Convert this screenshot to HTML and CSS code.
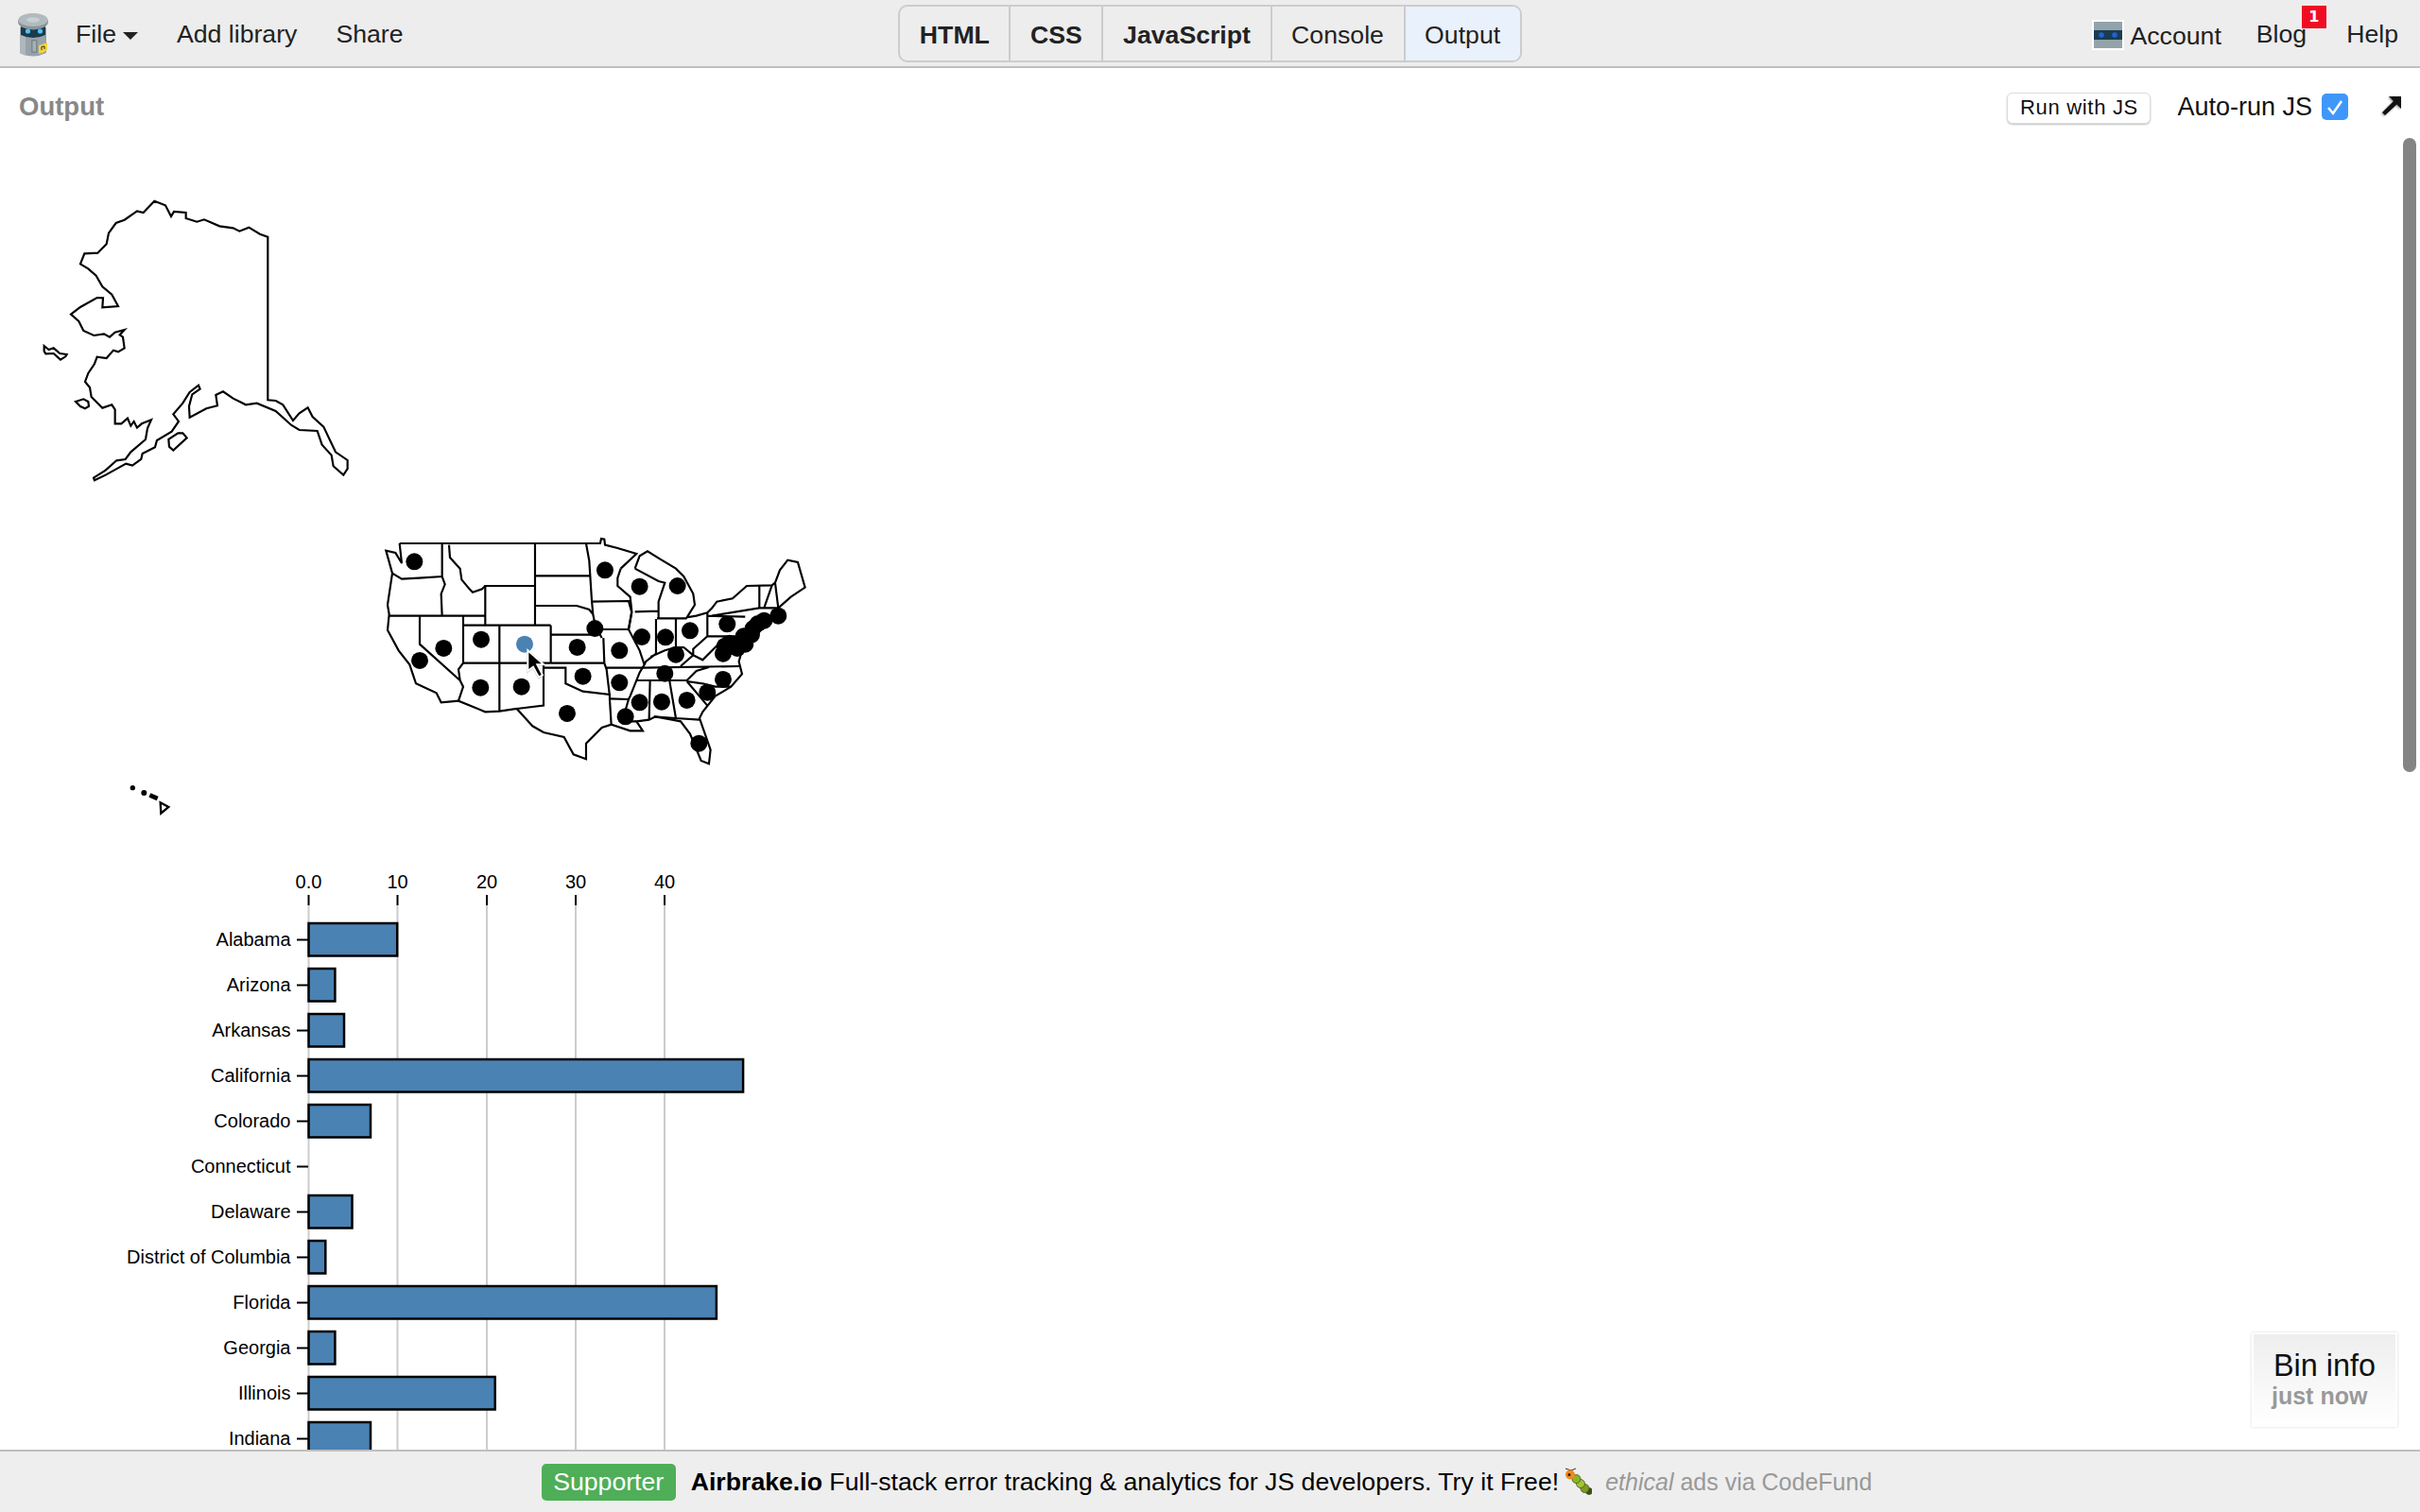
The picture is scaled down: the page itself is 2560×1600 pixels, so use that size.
FILE: index.html
```html
<!DOCTYPE html>
<html lang="en">
<head>
    <meta charset="UTF-8">
    <meta name="viewport" content="width=device-width, initial-scale=1.0">
    <title>JS Bin - Output</title>
    <link rel="stylesheet" href="styles.css">
</head>
<body>
    <!-- Top bar -->
    <header class="topbar">
        <nav class="menu">
            <svg class="logo" viewBox="10 6 50 60" width="50" height="60">
                <path d="M21 30 L21 57 Q35 64 49 57 L49 30 Z" fill="#97a3a9"/>
                <path d="M21 30 L21 57 Q24 59 27 60 L27 30 Z" fill="#aeb8bc"/>
                <path d="M22 27 H48 V38 Q35 44 22 38 Z" fill="#1c3a4b"/>
                <circle cx="29.500" cy="34" r="2.600" fill="#4cc5f6"/>
                <circle cx="42.500" cy="34" r="2.600" fill="#4cc5f6"/>
                <ellipse cx="35" cy="24" rx="16" ry="8.500" fill="#8b969b"/>
                <ellipse cx="35" cy="22" rx="15.500" ry="7" fill="#b1babe"/>
                <ellipse cx="35" cy="22" rx="7" ry="2.800" fill="#c8cfd2"/>
                <rect x="33" y="43" width="6.500" height="14" rx="1" fill="#7c888e"/>
                <rect x="34.500" y="44.500" width="3.500" height="11" fill="#a5afb4"/>
                <path d="M41 49 L50 46 V54 Q46 57 41 58 Z" fill="#f2d23c"/>
                <path d="M44 54 L44 50.500 L47 50 L47 53" stroke="#333" stroke-width="1" fill="none"/>
            </svg>
            <a class="menu-item file-item">File <span class="caret"></span></a>
            <a class="menu-item">Add library</a>
            <a class="menu-item">Share</a>
        </nav>
        <div class="tabs">
            <a class="tab tab-used">HTML</a>
            <a class="tab tab-used">CSS</a>
            <a class="tab tab-used">JavaScript</a>
            <a class="tab">Console</a>
            <a class="tab tab-active">Output</a>
        </div>
        <nav class="menu menu-right">
            <a class="menu-item account">
                <svg class="avatar" viewBox="0 0 30 28" width="34" height="32">
                    <rect width="30" height="28" fill="#93a3aa"/>
                    <rect y="9" width="30" height="10" fill="#1b3c50"/>
                    <circle cx="8" cy="14" r="2.800" fill="#1e63d6"/>
                    <circle cx="22" cy="14" r="2.800" fill="#1e63d6"/>
                </svg>
                Account
            </a>
            <a class="menu-item blog">Blog<span class="badge">1</span></a>
            <a class="menu-item">Help</a>
        </nav>
    </header>

    <!-- Output panel -->
    <main class="output">
        <div class="output-bar">
            <span class="output-title">Output</span>
            <div class="output-controls">
                <button type="button" class="run-btn">Run with JS</button>
                <label class="autorun">Auto-run JS
                    <span class="checkbox">
                        <svg viewBox="0 0 28 28" width="28" height="28">
                            <path d="M7 15 L12 21 L21 8" fill="none" stroke="#fff" stroke-width="2.500"/>
                        </svg>
                    </span>
                </label>
                <svg class="popout" viewBox="0 0 20 20" width="20" height="20">
                    <polygon points="20,0 20,13 15.500,8.500 3,20 0,17 12,5 7,0"/>
                </svg>
            </div>
        </div>

        <!-- Maps -->
        <svg class="maps" viewBox="0 154 900 746">
            <g class="state-lines" transform="translate(30 200) scale(0.3333)">
                <path class="ak" d="M400,38 435,52 453,87 462,72 500,75 500,93 535,104 558,97 607,118 650,124 670,134 700,122 735,143 760,152 760,670 785,672 808,685 840,735 860,712 887,694 902,723 937,755 975,835 1013,861 1013,888 1000,908 968,880 962,845 932,812 917,768 860,765 835,750 785,705 725,680 690,685 650,665 618,643 595,654 600,688 565,697 512,725 510,690 520,652 545,635 540,623 512,645 490,680 460,715 477,738 455,770 408,798 402,820 362,840 358,858 330,878 310,872 245,908 210,925 207,917 245,893 280,862 308,858 325,835 372,795 378,760 390,733 360,745 345,758 335,738 325,752 315,728 295,745 275,745 275,700 265,685 235,695 200,660 195,630 180,612 190,585 210,555 218,533 248,537 270,512 285,517 305,505 300,470 290,463 305,447 275,455 258,470 240,460 208,465 175,450 160,420 135,398 165,375 218,345 237,346 235,376 285,372 265,335 235,310 215,275 190,253 165,238 178,205 220,203 248,175 255,140 278,108 305,98 345,70 365,75 Z"/>
                <path class="ak" d="M50,498 65,510 80,505 100,522 122,525 118,532 102,542 80,522 55,523 50,515 Z"/>
                <path class="ak" d="M150,675 175,667 190,675 192,690 180,697 165,690 Z"/>
                <path class="ak" d="M445,795 475,775 490,775 503,790 460,830 447,818 Z"/>
            </g>

            <g transform="translate(125 820) scale(0.3333)">
                <circle cx="46" cy="41" r="8" class="dot"/>
                <circle cx="82" cy="57" r="9" class="dot"/>
                <path class="hi-chain" d="M100,64 L125,75"/>
                <path class="hi-big" d="M134,88 L160,102 L136,122 Z"/>
            </g>

            <g class="state-lines" transform="translate(390 560) scale(0.3333)">
                <path class="us" d="M98,45 L735,45 738,30 748,32 750,50 790,60 850,78 800,125 M845,125 860,85 885,70 925,95 975,125 1000,150 1030,205 1035,240 1010,280 1040,275 1075,265 1090,250 1105,230 1155,220 1200,180 1280,178 1290,170 1305,130 1330,98 1362,105 1385,185 1340,215 1300,250 1305,275 1240,300 1195,350 1175,420 1185,460 1150,500 1100,530 1060,580 1050,600 1085,700 1080,745 1055,735 1020,650 990,610 910,595 890,605 850,610 870,640 830,640 770,620 740,630 690,680 690,730 650,715 620,660 555,645 520,625 470,570 415,578 370,580 285,545 230,550 215,520 150,490 130,430 95,385 60,320 65,270 60,240 75,140 55,68 85,75 105,108 98,45"/>
                <path class="us" d="M75,140 105,158 160,155 235,150 M233,45 233,150 242,175 230,205 233,275 M65,275 370,275 M255,50 258,90 290,125 295,160 320,190 330,200 360,190 370,180"/>
                <path class="us" d="M370,180 528,180 528,305 370,305 Z M528,45 528,180 M530,148 700,148 M530,243 660,243 700,255 712,270 720,310 740,345 M690,45 700,100 708,225 712,270 M705,230 825,228 835,265 825,318 M578,305 528,305 M578,305 578,425 M578,335 720,335 M578,425 748,425 M745,345 748,425"/>
                <path class="us" d="M162,275 162,365 290,480 285,445 300,425 300,275 M300,305 370,305 M415,305 415,578 M300,425 578,425 M290,480 300,500 285,545 M555,425 555,560 470,570 M555,440 625,440 625,490 680,515 765,525 765,540 770,620"/>
                <path class="us" d="M720,318 825,318 860,385 875,430 860,455 830,530 825,540 805,610 850,610 M748,425 755,445 765,530 M750,440 870,440 M765,538 825,540"/>
                <path class="us" d="M800,125 790,155 790,180 830,215 835,260 825,318 M845,125 920,165 940,170 920,230 920,280 M845,262 920,260 M912,285 912,395 880,420 875,430 M915,283 1010,283 M975,285 975,375 M895,405 940,385 975,375 1000,375 1030,400 990,435 M1075,265 1075,340 1030,380 1030,400 1060,415 1100,375 1120,355 M1075,340 1190,340 M1075,275 1195,278"/>
                <path class="us" d="M870,440 1178,435 M850,480 1010,480 1040,450 1080,438 M1010,483 1060,490 1100,500 1150,500 M1010,483 1075,560 M893,480 890,605 M955,482 975,600 M905,595 975,600 1050,605 M1090,275 1240,250 1300,250 M1240,180 1240,250 M1255,250 1280,178 M1290,170 1300,250"/>
            </g>

            <g transform="translate(390 560) scale(0.3333)">
                <circle class="dot" cx="145" cy="103" r="27"/>
                <circle class="dot" cx="750" cy="130" r="27"/>
                <circle class="dot" cx="860" cy="182" r="27"/>
                <circle class="dot" cx="980" cy="180" r="27"/>
                <circle class="dot" cx="1138" cy="301" r="27"/>
                <circle class="dot" cx="718" cy="315" r="27"/>
                <circle class="dot" cx="1300" cy="275" r="27"/>
                <circle class="dot" cx="1255" cy="290" r="27"/>
                <circle class="dot" cx="1020" cy="322" r="27"/>
                <circle class="dot" cx="942" cy="343" r="27"/>
                <circle class="dot" cx="867" cy="342" r="27"/>
                <circle class="dot" cx="796" cy="385" r="27"/>
                <circle class="dot" cx="662" cy="375" r="27"/>
                <circle class="dot" cx="357" cy="350" r="27"/>
                <circle class="dot" cx="238" cy="378" r="27"/>
                <circle class="dot" cx="162" cy="417" r="27"/>
                <circle class="dot" cx="355" cy="503" r="27"/>
                <circle class="dot" cx="485" cy="500" r="27"/>
                <circle class="dot" cx="680" cy="467" r="27"/>
                <circle class="dot" cx="796" cy="487" r="27"/>
                <circle class="dot" cx="975" cy="398" r="27"/>
                <circle class="dot" cx="1125" cy="395" r="27"/>
                <circle class="dot" cx="940" cy="458" r="27"/>
                <circle class="dot" cx="1125" cy="477" r="27"/>
                <circle class="dot" cx="1075" cy="518" r="27"/>
                <circle class="dot" cx="860" cy="550" r="27"/>
                <circle class="dot" cx="930" cy="548" r="27"/>
                <circle class="dot" cx="1010" cy="543" r="27"/>
                <circle class="dot" cx="815" cy="595" r="27"/>
                <circle class="dot" cx="630" cy="585" r="27"/>
                <circle class="dot" cx="1048" cy="680" r="27"/>
                <circle class="dot" cx="1235" cy="300" r="27"/>
                <circle class="dot" cx="1220" cy="315" r="27"/>
                <circle class="dot" cx="1215" cy="335" r="27"/>
                <circle class="dot" cx="1195" cy="365" r="27"/>
                <circle class="dot" cx="1160" cy="365" r="27"/>
                <circle class="dot" cx="1190" cy="340" r="27"/>
                <circle class="dot" cx="1130" cy="372" r="27"/>
                <circle class="dot" cx="1170" cy="378" r="27"/>
                <circle class="dot" cx="1145" cy="362" r="27"/>
                <circle class="dot-active" cx="495" cy="365" r="27"/>
                <path class="cursor" d="M505,385 505,450 522,437 540,470 552,463 535,430 556,430 Z"/>
            </g>
        </svg>

        <!-- Bar chart -->
        <svg class="chart" viewBox="0 900 900 634">
            <g class="grid">
                <line x1="326.500" y1="958" x2="326.500" y2="1534"/>
                <line x1="420.500" y1="958" x2="420.500" y2="1534"/>
                <line x1="515" y1="958" x2="515" y2="1534"/>
                <line x1="609" y1="958" x2="609" y2="1534"/>
                <line x1="703" y1="958" x2="703" y2="1534"/>
            </g>
            <g class="axis-top">
                <line x1="326.500" y1="947" x2="326.500" y2="958"/>
                <line x1="420.500" y1="947" x2="420.500" y2="958"/>
                <line x1="515" y1="947" x2="515" y2="958"/>
                <line x1="609" y1="947" x2="609" y2="958"/>
                <line x1="703" y1="947" x2="703" y2="958"/>
                <text x="326.500" y="940">0.0</text>
                <text x="420.500" y="940">10</text>
                <text x="515" y="940">20</text>
                <text x="609" y="940">30</text>
                <text x="703" y="940">40</text>
            </g>
            <g class="row"><text x="307.500" y="1001">Alabama</text><line x1="314" y1="994.500" x2="326" y2="994.500"/><rect x="326.500" y="977" width="93.700" height="34.500"/></g>
            <g class="row"><text x="307.500" y="1049">Arizona</text><line x1="314" y1="1042.500" x2="326" y2="1042.500"/><rect x="326.500" y="1025" width="27.900" height="34.500"/></g>
            <g class="row"><text x="307.500" y="1097">Arkansas</text><line x1="314" y1="1090.500" x2="326" y2="1090.500"/><rect x="326.500" y="1073" width="37.500" height="34.500"/></g>
            <g class="row"><text x="307.500" y="1145">California</text><line x1="314" y1="1138.500" x2="326" y2="1138.500"/><rect x="326.500" y="1121" width="459.600" height="34.500"/></g>
            <g class="row"><text x="307.500" y="1193">Colorado</text><line x1="314" y1="1186.500" x2="326" y2="1186.500"/><rect x="326.500" y="1169" width="65.500" height="34.500"/></g>
            <g class="row"><text x="307.500" y="1241">Connecticut</text><line x1="314" y1="1234.500" x2="326" y2="1234.500"/></g>
            <g class="row"><text x="307.500" y="1289">Delaware</text><line x1="314" y1="1282.500" x2="326" y2="1282.500"/><rect x="326.500" y="1265" width="46" height="34.500"/></g>
            <g class="row"><text x="307.500" y="1337">District of Columbia</text><line x1="314" y1="1330.500" x2="326" y2="1330.500"/><rect x="326.500" y="1313" width="17.800" height="34.500"/></g>
            <g class="row"><text x="307.500" y="1385">Florida</text><line x1="314" y1="1378.500" x2="326" y2="1378.500"/><rect x="326.500" y="1361" width="431.400" height="34.500"/></g>
            <g class="row"><text x="307.500" y="1433">Georgia</text><line x1="314" y1="1426.500" x2="326" y2="1426.500"/><rect x="326.500" y="1409" width="27.900" height="34.500"/></g>
            <g class="row"><text x="307.500" y="1481">Illinois</text><line x1="314" y1="1474.500" x2="326" y2="1474.500"/><rect x="326.500" y="1457" width="197.200" height="34.500"/></g>
            <g class="row"><text x="307.500" y="1529">Indiana</text><line x1="314" y1="1522.500" x2="326" y2="1522.500"/><rect x="326.500" y="1505" width="65.500" height="34.500"/></g>
        </svg>

        <div class="scrollbar"></div>
        <div class="bin-info">
            <div class="bin-title">Bin info</div>
            <div class="bin-time">just now</div>
        </div>
    </main>

    <!-- Ad strip -->
    <footer class="adbar">
        <span class="supporter">Supporter</span>
        <span class="ad-text"><strong>Airbrake.io</strong> Full-stack error tracking &amp; analytics for JS developers. Try it Free!</span>
        <svg class="bug" viewBox="0 0 30 30" width="30" height="30">
            <path d="M2 1 L8 3 M8 3 L13 1" stroke="#333" stroke-width="1" fill="none"/>
            <circle class="bug-seg" cx="27" cy="25" r="3.500" fill="#3f4d14"/>
            <circle class="bug-seg" cx="22.500" cy="22" r="4.500" fill="#7d9c24"/>
            <circle class="bug-seg" cx="18" cy="17" r="4.500" fill="#a4c33a"/>
            <circle class="bug-seg" cx="13.500" cy="12" r="4.500" fill="#8ab52a"/>
            <circle cx="7" cy="7.500" r="5" fill="#ee8a1e"/>
            <circle cx="6" cy="7.500" r="1.500" fill="#222"/>
        </svg>
        <span class="ad-via"><em>ethical</em> ads via CodeFund</span>
    </footer>
</body>
</html>
```

FILE: styles.css
```css
html, body {
    height: 100%;
}
body {
    margin: 0;
    display: flex;
    flex-direction: column;
    overflow: hidden;
    font-family: "Liberation Sans", Arial, sans-serif;
    font-size: 26.67px;
    color: #222;
    background: #fff;
}

/* top bar */
.topbar {
    height: 70px;
    flex: none;
    display: grid;
    grid-template-columns: 1fr auto 1fr;
    align-items: center;
    background: #ededed;
    border-bottom: 2px solid #bfbfbf;
}
.menu {
    display: flex;
    align-items: center;
    gap: 41px;
}
.menu-item {
    padding-top: 3px;
}
.logo {
    margin-left: 10px;
    margin-right: -21px;
    display: block;
}
.file-item {
    display: flex;
    align-items: center;
    gap: 7px;
}
.caret {
    width: 0;
    height: 0;
    border-left: 8px solid transparent;
    border-right: 8px solid transparent;
    border-top: 8px solid #222;
    margin-top: 3px;
}
.menu-right {
    justify-content: flex-end;
    padding-right: 23px;
    gap: 42px;
}
.account {
    display: flex;
    align-items: center;
    gap: 6px;
    margin-top: 3px;
    margin-right: -5px;
}
.avatar {
    border: 2px solid #fff;
    margin-top: -3px;
    width: 30px;
    height: 28px;
    display: block;
}
.blog {
    position: relative;
}
.badge {
    position: absolute;
    left: 48px;
    top: -12px;
    width: 26px;
    height: 24px;
    background: #f00d23;
    color: #fff;
    font-family: "DejaVu Sans", sans-serif;
    font-size: 16px;
    font-weight: bold;
    line-height: 24px;
    text-align: center;
}
.tabs {
    display: flex;
    height: 57px;
    border: 2px solid #ccc;
    border-radius: 10px;
    overflow: hidden;
    line-height: 60px;
}
.tab {
    padding: 0 20.6px;
    border-left: 2px solid #ccc;
}
.tab:first-child {
    border-left: 0;
}
.tab-used {
    font-weight: bold;
}
.tab-active {
    background: #e9f1fc;
}

/* output panel */
.output {
    flex: 1;
    position: relative;
    overflow: hidden;
    min-height: 0;
}
.output-bar {
    height: 82px;
    display: flex;
    align-items: center;
    justify-content: space-between;
    padding: 0 20px;
}
.output-title {
    font-size: 27.5px;
    font-weight: bold;
    color: #888;
}
.output-controls {
    display: flex;
    align-items: center;
}
.run-btn {
    width: 152px;
    height: 33px;
    margin-top: 2px;
    padding: 0;
    background: #fff;
    border: 1px solid #ddd;
    border-radius: 6px;
    box-shadow: 0 1px 2px rgba(0, 0, 0, 0.25);
    font-family: inherit;
    font-size: 22px;
    letter-spacing: 0.7px;
    color: #111;
}
.autorun {
    display: flex;
    align-items: center;
    gap: 10px;
    margin-left: 28px;
    margin-right: 36px;
    font-size: 27px;
    color: #111;
}
.checkbox {
    width: 28px;
    height: 28px;
    background: #3f97fb;
    border-radius: 5px;
    display: block;
}
.checkbox svg {
    display: block;
}
.popout {
    fill: #111;
    display: block;
    margin-top: -3px;
    filter: drop-shadow(-1px 1px 1px rgba(0, 0, 0, 0.4));
}
.maps, .chart {
    display: block;
    width: 900px;
}
.maps {
    height: 746px;
}
.chart {
    height: 634px;
}

/* map */
.ak {
    fill: #fff;
    stroke: #000;
    stroke-width: 6.5;
}
.us {
    fill: none;
    stroke: #000;
    stroke-width: 6.5;
}
.dot {
    fill: #000;
}
.dot-active {
    fill: #4a82b3;
}
.hi-chain {
    stroke: #000;
    stroke-width: 14;
    fill: none;
}
.hi-big {
    fill: #fff;
    stroke: #000;
    stroke-width: 7;
}
.cursor {
    fill: #000;
    stroke: #fff;
    stroke-width: 6;
    filter: drop-shadow(0 1px 2px rgba(0, 0, 0, 0.4));
}

/* chart */
.grid line {
    stroke: #ccc;
    stroke-width: 2;
}
.axis-top line,
.row line {
    stroke: #000;
    stroke-width: 2;
}
.axis-top text,
.row text {
    font-size: 20px;
    fill: #000;
}
.axis-top text {
    text-anchor: middle;
}
.row text {
    text-anchor: end;
}
.row rect {
    fill: #4a82b3;
    stroke: #000;
    stroke-width: 2.5;
}

/* overlays */
.scrollbar {
    position: absolute;
    left: 2542px;
    top: 74px;
    width: 14px;
    height: 671px;
    background: #848484;
    border-radius: 7px;
}
.bin-info {
    position: absolute;
    right: 24px;
    bottom: 24px;
    width: 150px;
    height: 96px;
    border: 2px solid #fff;
    box-shadow: 0 0 3px rgba(0, 0, 0, 0.15);
    background: linear-gradient(#eee, #fff);
}
.bin-title {
    margin: 14px 0 0 21px;
    font-size: 32.4px;
    line-height: 38px;
    color: #111;
}
.bin-time {
    margin-left: 19px;
    font-size: 25px;
    line-height: 26px;
    font-weight: bold;
    color: #999;
}

/* ad strip */
.adbar {
    height: 66px;
    flex: none;
    display: flex;
    align-items: center;
    justify-content: center;
    padding-right: 7px;
    box-sizing: border-box;
    background: #eee;
    border-top: 2px solid #bfbfbf;
    color: #000;
}
.supporter {
    width: 142px;
    height: 39px;
    line-height: 39px;
    text-align: center;
    background: #4fae58;
    color: #fff;
    border-radius: 5px;
    margin-right: 16px;
}
.bug {
    margin: 0 14px 0 5px;
    display: block;
}
.bug-seg {
    stroke: #44551a;
    stroke-width: 0.8;
}
.ad-via {
    font-size: 25px;
    color: #999;
}
```
